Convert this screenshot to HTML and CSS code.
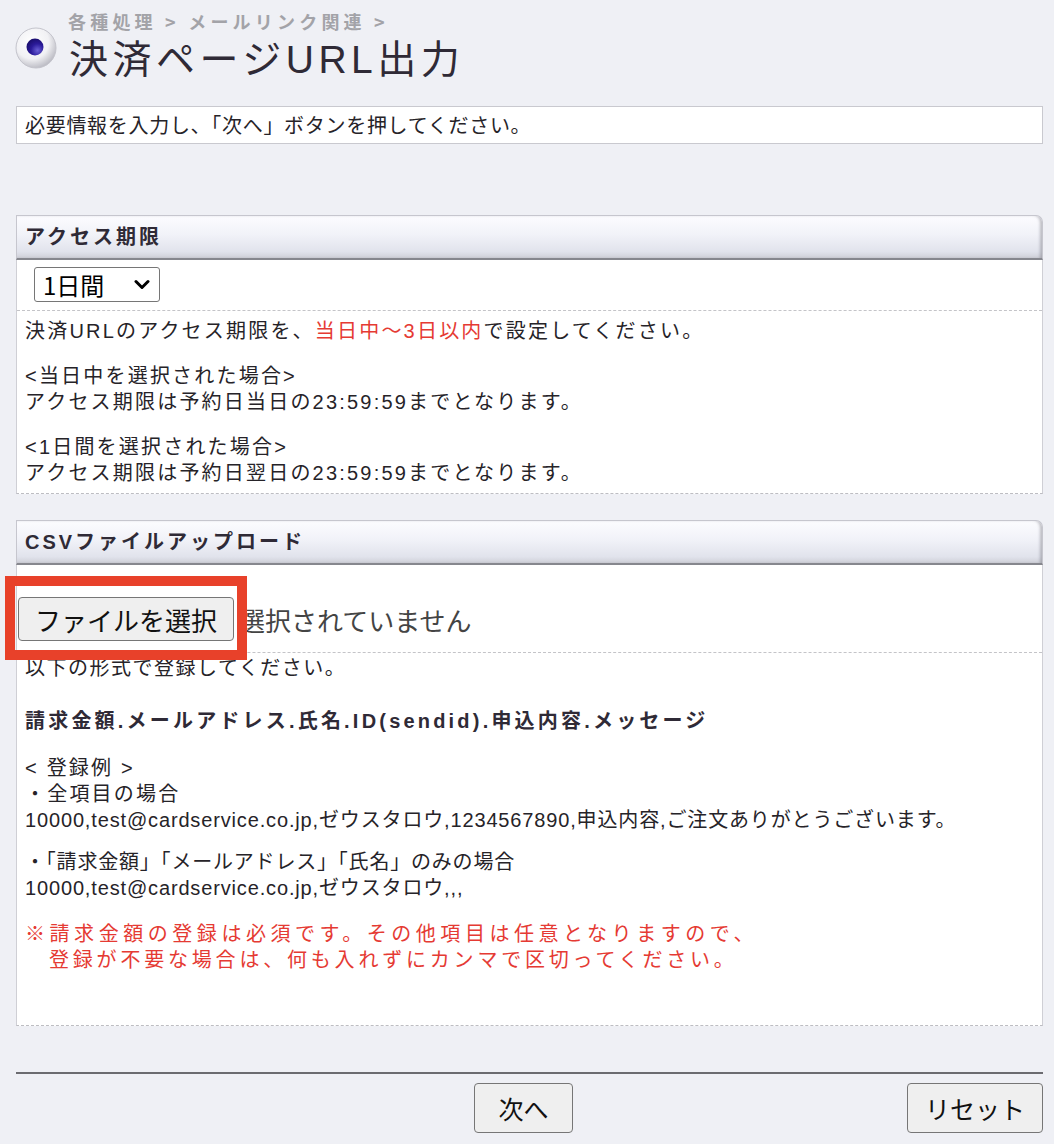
FILE: index.html
```html
<!DOCTYPE html>
<html lang="ja">
<head>
<meta charset="utf-8">
<title>決済ページURL出力</title>
<link rel="stylesheet" href="styles.css">
</head>
<body>
<div class="page">
  <header class="page-head">
    <svg class="head-icon" width="42" height="42" viewBox="0 0 42 42" aria-hidden="true">
      <defs>
        <radialGradient id="ball" cx="40%" cy="35%" r="70%">
          <stop offset="0%" stop-color="#ffffff"/>
          <stop offset="60%" stop-color="#f1f1f4"/>
          <stop offset="100%" stop-color="#b5b5be"/>
        </radialGradient>
        <radialGradient id="dot" cx="65%" cy="70%" r="70%">
          <stop offset="0%" stop-color="#6a5fd6"/>
          <stop offset="55%" stop-color="#2b1b9a"/>
          <stop offset="100%" stop-color="#1c0f70"/>
        </radialGradient>
      </defs>
      <circle cx="21" cy="21" r="20" fill="url(#ball)" stroke="#c4c4cc" stroke-width="1"/>
      <circle cx="20" cy="20" r="8.5" fill="url(#dot)"/>
    </svg>
    <div class="head-text">
      <div class="crumb">各種処理 &gt; メールリンク関連 &gt;</div>
      <h1 class="title">決済ページURL出力</h1>
    </div>
  </header>

  <div class="notice">必要情報を入力し、「次へ」ボタンを押してください。</div>

  <section class="panel panel-access">
    <h2 class="panel-head">アクセス期限</h2>
    <div class="panel-body">
      <div class="control-row">
        <span class="select-wrap">
          <select class="period">
            <option>当日中</option>
            <option selected>1日間</option>
            <option>2日間</option>
            <option>3日間</option>
          </select>
          <svg class="chev" width="16" height="11" viewBox="0 0 16 11" aria-hidden="true">
            <path d="M2 2.5 L8 8.5 L14 2.5" fill="none" stroke="#000" stroke-width="3" stroke-linecap="round" stroke-linejoin="round"/>
          </svg>
        </span>
      </div>
      <div class="panel-text access-text">
        <p>決済URLのアクセス期限を、<span class="red">当日中〜3日以内</span>で設定してください。</p>
        <p>&lt;当日中を選択された場合&gt;<br>アクセス期限は予約日当日の23:59:59までとなります。</p>
        <p>&lt;1日間を選択された場合&gt;<br>アクセス期限は予約日翌日の23:59:59までとなります。</p>
      </div>
    </div>
  </section>

  <section class="panel panel-csv">
    <h2 class="panel-head">CSVファイルアップロード</h2>
    <div class="panel-body">
      <div class="control-row file-row">
        <span class="file-mark"><button type="button" class="btn file-btn">ファイルを選択</button></span>
        <span class="file-status">選択されていません</span>
      </div>
      <div class="panel-text csv-text">
        <p>以下の形式で登録してください。</p>
        <p class="format">請求金額.メールアドレス.氏名.ID(sendid).申込内容.メッセージ</p>
        <p class="example">&lt; 登録例 &gt;<br>・全項目の場合<br><span class="sample">10000,test@cardservice.co.jp,ゼウスタロウ,1234567890,申込内容,ご注文ありがとうございます。</span></p>
        <p class="example2">・「請求金額」「メールアドレス」「氏名」のみの場合<br><span class="sample">10000,test@cardservice.co.jp,ゼウスタロウ,,,</span></p>
        <p class="red note">※請求金額の登録は必須です。その他項目は任意となりますので、<br><span class="indent">登録が不要な場合は、何も入れずにカンマで区切ってください。</span></p>
      </div>
    </div>
  </section>

  <footer class="actions">
    <span></span>
    <button type="button" class="btn act-btn">次へ</button>
    <button type="button" class="btn act-btn reset">リセット</button>
  </footer>
</div>
</body>
</html>
```

FILE: styles.css
```css
html, body {
  margin: 0;
  padding: 0;
}
body {
  background: #eff0f5;
  color: #262328;
  font-family: "Liberation Sans", "Noto Sans CJK JP", sans-serif;
  font-size: 20px;
}
.page {
  padding: 8px 11px 12px 16px;
}
.page-head {
  display: flex;
  align-items: flex-start;
  gap: 12px;
}
.head-icon {
  flex: none;
  margin-top: 19px;
  margin-left: -1px;
}
.head-text {
  display: flex;
  flex-direction: column;
}
.crumb {
  font-family: "Noto Sans CJK JP", sans-serif;
  font-size: 18px;
  line-height: 26px;
  font-weight: bold;
  color: #a3a3a8;
  letter-spacing: 4.2px;
  margin-left: -1px;
}
.title {
  margin: 0;
  font-size: 39px;
  line-height: 52px;
  font-weight: normal;
  letter-spacing: 4.5px;
  color: #2f2a36;
}
.notice {
  margin-top: 20px;
  background: #fff;
  border: 1px solid #c9c9cf;
  padding: 6px 8px 4px;
  line-height: 26px;
  letter-spacing: 0.7px;
}
.panel {
  margin-top: 71px;
}
.panel-csv {
  margin-top: 26px;
}
.panel-head {
  margin: 0;
  height: 42px;
  line-height: 42px;
  padding-left: 8px;
  font-size: 20px;
  font-weight: bold;
  letter-spacing: 3px;
  color: #2f2a36;
  background: linear-gradient(#fcfcff 0%, #f1f2f8 45%, #e1e3ec 85%, #cfd0d8 100%);
  border: 1px solid #c6c6ce;
  border-bottom: 2px solid #86878e;
  border-radius: 0 7px 0 0;
  box-shadow: inset -3px 0 3px -1px rgba(80, 80, 90, 0.35);
}
.panel-body {
  background: #fff;
  border-left: 1px solid #cfcfd5;
  border-right: 1px solid #cfcfd5;
  border-bottom: 1px dashed #bdbdc2;
}
.control-row {
  padding: 7px 17px 8px;
  border-bottom: 1px dashed #c4c4c8;
  display: flex;
  align-items: center;
}
.select-wrap {
  position: relative;
  display: inline-flex;
}
.period {
  appearance: none;
  -webkit-appearance: none;
  width: 126px;
  height: 35px;
  font-family: "Noto Sans CJK JP", sans-serif;
  font-size: 24px;
  line-height: 33px;
  color: #000;
  background: #fff;
  border: 1px solid #767676;
  border-radius: 3px;
  padding: 0 0 0 8px;
}
.chev {
  position: absolute;
  right: 10px;
  top: 12px;
  pointer-events: none;
}
.panel-text {
  padding: 7px 8px 7px;
  line-height: 26px;
}
.panel-text p {
  margin: 0 0 19px;
}
.panel-text p:last-child {
  margin-bottom: 0;
}
.access-text {
  letter-spacing: 2.2px;
}
.red {
  color: #e53a33;
}
.file-row {
  padding: 32px 1px 11px;
}
.file-mark {
  position: relative;
  display: inline-flex;
}
.file-mark::after {
  content: "";
  position: absolute;
  left: -13px;
  right: -13px;
  top: -21px;
  bottom: -19px;
  border: 10px solid #e8412a;
  pointer-events: none;
}
.btn {
  font-family: "Noto Sans CJK JP", sans-serif;
  color: #111;
  background: #efefef;
  border: 1px solid #767676;
  border-radius: 4px;
  cursor: pointer;
}
.file-btn {
  width: 216px;
  height: 44px;
  font-size: 26px;
  padding: 0;
}
.file-status {
  margin-left: 5px;
  font-family: "Noto Sans CJK JP", sans-serif;
  font-size: 26px;
  color: #444;
}
.csv-text {
  padding: 2px 8px 52px;
  letter-spacing: 1.5px;
}
.csv-text .format {
  font-weight: bold;
  color: #2f2a36;
  letter-spacing: 3.2px;
  margin: 27px 0 21px;
}
.csv-text .example {
  margin-bottom: 16px;
  letter-spacing: 2.2px;
}
.csv-text .example2 {
  margin-bottom: 20px;
  letter-spacing: 0.8px;
}
.sample {
  letter-spacing: 0.85px;
}
.note {
  letter-spacing: 4.55px;
}
.indent {
  padding-left: 24px;
  letter-spacing: 3.8px;
}
.actions {
  margin-top: 46px;
  border-top: 2px solid #6b6b70;
  padding-top: 9px;
  display: grid;
  grid-template-columns: 1fr auto 1fr;
  align-items: center;
}
.act-btn {
  height: 50px;
  font-size: 25px;
  padding: 0 23px;
  margin-right: 12px;
}
.reset {
  justify-self: end;
  padding: 0 17px;
  margin-right: 0;
}
```
